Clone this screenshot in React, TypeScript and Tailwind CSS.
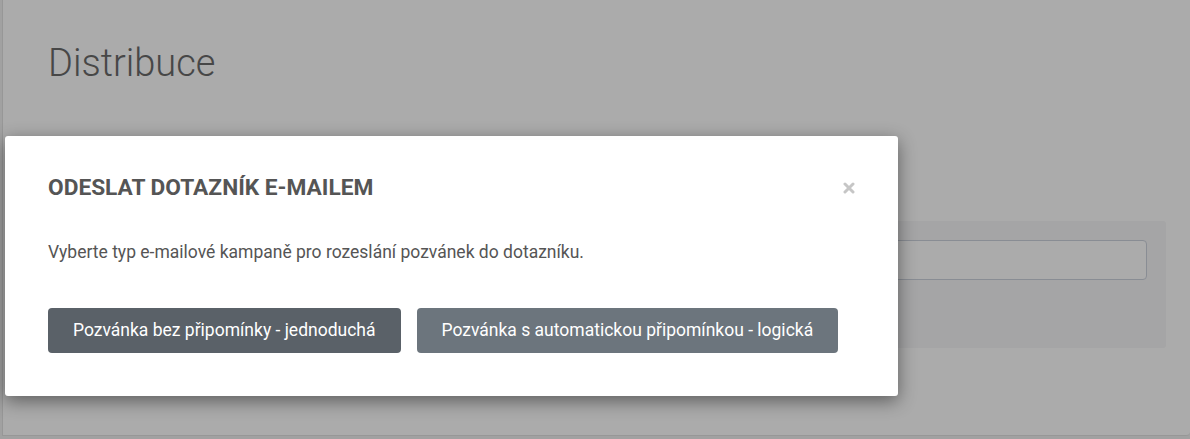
export default function App() {
  return (
    <div className="relative h-[439px] w-[1190px] overflow-hidden bg-[#f0f0f0] font-['Roboto',sans-serif]">
      {/* page underneath */}
      <div className="ml-[2px] h-[436px] rounded-br-[4px] border-l border-b border-[#e2e2e2] bg-white">
        <div className="h-[96px] pl-[45px] pt-[41px]">
          <h1 className="text-[38px] font-light leading-[44px] text-[#6b6b6b]">Distribuce</h1>
        </div>
        <div className="flex justify-end pr-[24px] pt-[125px]">
          <div className="h-[127px] w-[1140px] rounded-[3px] bg-[#f6f6f8] px-[19px] pt-[19px]">
            <div className="h-[40px] w-full rounded-[4px] border border-[#cdd3dd] bg-white" />
          </div>
        </div>
      </div>

      {/* overlay */}
      <div className="absolute inset-0 bg-black/[0.33]" />

      {/* modal */}
      <div className="absolute left-[5px] top-[136px] h-[260px] w-[893px] rounded-[3px] bg-white pl-[43px] pr-[43px] pt-[38px] shadow-[0_5px_18px_rgba(0,0,0,0.45)]">
        <div className="flex items-center justify-between">
          <h2 className="text-[22.7px] font-bold leading-[28px] text-[#555]">ODESLAT DOTAZNÍK E-MAILEM</h2>
          <svg width="12" height="12" viewBox="0 0 12 12">
            <path d="M2 2 L10 10 M10 2 L2 10" stroke="#c6c6c6" strokeWidth="3" strokeLinecap="round" />
          </svg>
        </div>
        <p className="mt-[38px] text-[17.5px] leading-[24px] text-[#555]">
          Vyberte typ e-mailové kampaně pro rozeslání pozvánek do dotazníku.
        </p>
        <div className="mt-[44px] flex gap-[16px]">
          <button className="h-[45px] rounded-[4px] bg-[#5a6168] px-[25px] text-[17.5px] text-white">
            Pozvánka bez připomínky - jednoduchá
          </button>
          <button className="h-[45px] rounded-[4px] bg-[#6c757d] px-[25px] text-[17.5px] text-white">
            Pozvánka s automatickou připomínkou - logická
          </button>
        </div>
      </div>
    </div>
  )
}
